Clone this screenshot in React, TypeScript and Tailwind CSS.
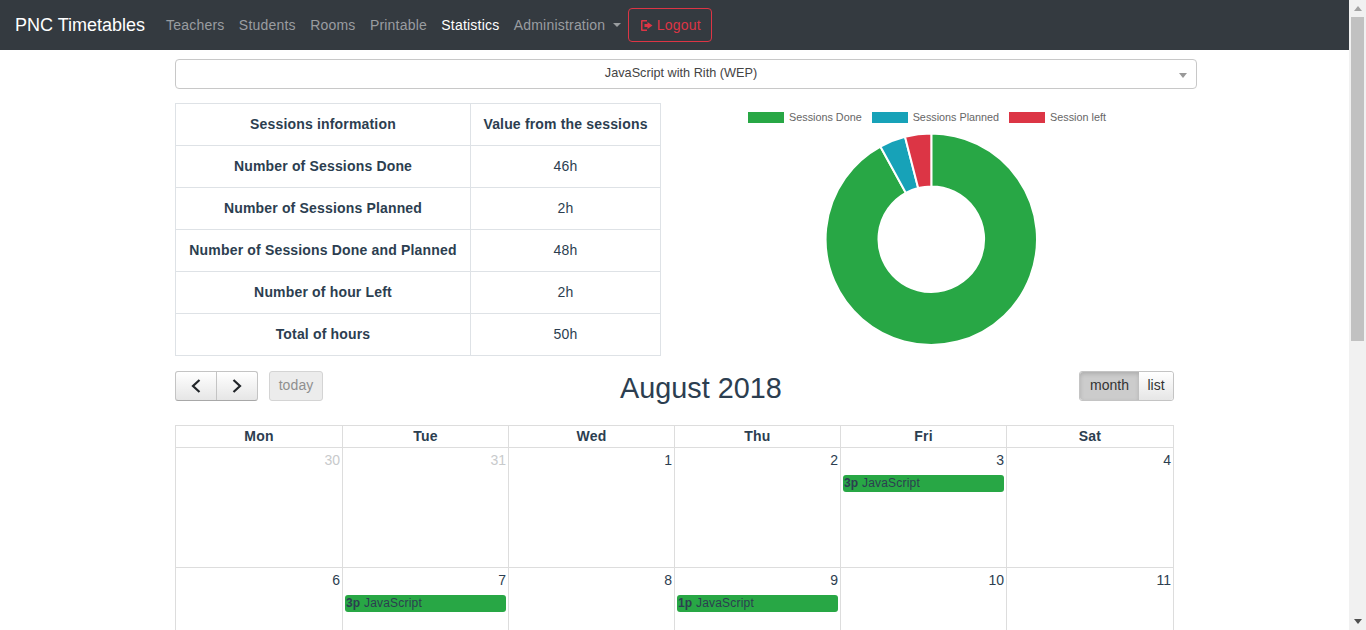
const NAV_LINKS = ['Teachers', 'Students', 'Rooms', 'Printable', 'Statistics', 'Administration']

const STATS = [
  ['Number of Sessions Done', '46h'],
  ['Number of Sessions Planned', '2h'],
  ['Number of Sessions Done and Planned', '48h'],
  ['Number of hour Left', '2h'],
  ['Total of hours', '50h'],
]

const LEGEND = [
  { label: 'Sessions Done', color: 'bg-[#28a745]' },
  { label: 'Sessions Planned', color: 'bg-[#17a2b8]' },
  { label: 'Session left', color: 'bg-[#dc3545]' },
]

const DAYS = ['Mon', 'Tue', 'Wed', 'Thu', 'Fri', 'Sat']

const WEEKS = [
  [
    { n: 30, muted: true },
    { n: 31, muted: true },
    { n: 1 },
    { n: 2 },
    { n: 3, event: '3p' },
    { n: 4 },
  ],
  [
    { n: 6 },
    { n: 7, event: '3p' },
    { n: 8 },
    { n: 9, event: '1p' },
    { n: 10 },
    { n: 11 },
  ],
]

// donut slice between two angles (degrees, clockwise from 12 o'clock)
function slice(from: number, to: number, R = 105.7, r = 52.8, cx = 107.3, cy = 107.2) {
  const pt = (rad: number, a: number) => {
    const t = ((a - 90) * Math.PI) / 180
    return `${(cx + rad * Math.cos(t)).toFixed(2)} ${(cy + rad * Math.sin(t)).toFixed(2)}`
  }
  const large = to - from > 180 ? 1 : 0
  return `M${pt(R, from)} A${R} ${R} 0 ${large} 1 ${pt(R, to)} L${pt(r, to)} A${r} ${r} 0 ${large} 0 ${pt(r, from)} Z`
}

function Donut() {
  return (
    <svg width="214" height="214" viewBox="0 0 214 214" className="block">
      <path d={slice(0, 331.2)} fill="#28a745" stroke="#fff" strokeWidth="2" />
      <path d={slice(331.2, 345.6)} fill="#17a2b8" stroke="#fff" strokeWidth="2" />
      <path d={slice(345.6, 360)} fill="#dc3545" stroke="#fff" strokeWidth="2" />
    </svg>
  )
}

function Scrollbar() {
  return (
    <div className="w-[17px] h-full shrink-0 bg-[#f1f1f1] flex flex-col">
      <div className="h-[17px] flex items-center justify-center">
        <span className="w-0 h-0 border-x-[4px] border-x-transparent border-b-[5px] border-b-[#a3a3a3]" />
      </div>
      <div className="h-[324px] mx-[2px] bg-[#c1c1c1]" />
      <div className="flex-1" />
      <div className="h-[17px] flex items-center justify-center">
        <span className="w-0 h-0 border-x-[4px] border-x-transparent border-t-[5px] border-t-[#505050]" />
      </div>
    </div>
  )
}

function Chevron({ flip }: { flip?: boolean }) {
  return (
    <svg width="10" height="14" viewBox="0 0 10 14" fill="none" stroke="#212529" strokeWidth="2.2" className={flip ? 'rotate-180' : ''}>
      <path d="M8.5 1L2 7l6.5 6" />
    </svg>
  )
}

export default function App() {
  return (
    <div className="flex h-[630px] overflow-hidden bg-white text-[#2c3e50] font-['Liberation_Sans',Arial,sans-serif]">
      <div className="flex-1 min-w-0">
        {/* navbar */}
        <nav className="h-[50px] bg-[#343a40] flex items-center pl-[15px]">
          <span className="text-[18px] text-white mr-[21px]">PNC Timetables</span>
          <div className="flex items-center gap-[14.4px] text-[14px] tracking-[0.2px] text-[#9a9da0]">
            {NAV_LINKS.map(link => (
              <span key={link} className={link === 'Statistics' ? 'text-white' : ''}>
                {link}
              </span>
            ))}
          </div>
          <span className="ml-[8px] w-0 h-0 border-x-[4px] border-x-transparent border-t-[4px] border-t-[#9a9da0]" />
          <button className="ml-[7px] h-[34px] w-[84px] border border-[#dc3545] rounded-[4px] text-[14px] tracking-[0.2px] text-[#dc3545] flex items-center justify-center gap-[4px]">
            <svg width="13" height="13" viewBox="0 0 13 13" fill="#dc3545">
              <path d="M2 1h5v1.5H2.5v8H7V12H2a1 1 0 0 1-1-1V2a1 1 0 0 1 1-1z" />
              <path d="M7.5 3l5 3.5-5 3.5V8H4.5V5h3z" />
            </svg>
            Logout
          </button>
        </nav>

        <div className="pl-[175px] pt-[9px]">
          {/* select */}
          <div className="relative w-[1022px] h-[30px] border border-[#c8c8c8] rounded-[4px] flex items-center justify-center pr-[10px] pb-[1px] text-[12.7px] text-[#444]">
            JavaScript with Rith (WEP)
            <span className="absolute right-[9px] top-[13px] w-0 h-0 border-x-[4px] border-x-transparent border-t-[5px] border-t-[#999]" />
          </div>

          {/* stats + chart */}
          <div className="flex mt-[14px]">
            <div className="w-[486px] border-t border-l border-[#dee2e6] text-[14px] tracking-[0.17px] shrink-0">
              <div className="grid grid-cols-[295px_190px] h-[42px]">
                <div className="border-r border-b border-[#dee2e6] flex items-center justify-center font-bold">Sessions information</div>
                <div className="border-r border-b border-[#dee2e6] flex items-center justify-center font-bold">Value from the sessions</div>
              </div>
              {STATS.map(([label, value]) => (
                <div key={label} className="grid grid-cols-[295px_190px] h-[42px]">
                  <div className="border-r border-b border-[#dee2e6] flex items-center justify-center font-bold">{label}</div>
                  <div className="border-r border-b border-[#dee2e6] flex items-center justify-center">{value}</div>
                </div>
              ))}
            </div>
            <div className="w-[536px] flex flex-col items-center">
              <div className="flex items-center gap-[10px] text-[10.8px] text-[#666] h-[28px] mr-[4px]">
                {LEGEND.map(item => (
                  <span key={item.label} className="flex items-center gap-[5px]">
                    <span className={`w-[36px] h-[11px] ${item.color}`} />
                    {item.label}
                  </span>
                ))}
              </div>
              <div className="mt-[1px] ml-[4px]">
                <Donut />
              </div>
            </div>
          </div>

          {/* calendar toolbar */}
          <div className="w-[999px] mt-[15px] relative flex items-center justify-between h-[30px]">
            <div className="flex items-center">
              <div className="flex w-[83px] h-[30px] rounded-[3px] border border-[#c4c4c4] border-b-[#a8a8a8] bg-gradient-to-b from-white to-[#e6e6e6]">
                <span className="flex-1 flex items-center justify-center border-r border-[#c4c4c4]">
                  <Chevron />
                </span>
                <span className="flex-1 flex items-center justify-center">
                  <Chevron flip />
                </span>
              </div>
              <div className="ml-[11px] w-[54px] h-[30px] pb-[2px] rounded-[3px] border border-[#d4d4d4] bg-[#ececec] flex items-center justify-center text-[14px] tracking-[0.1px] text-[#8f8f8f]">
                today
              </div>
            </div>
            <div className="flex w-[95px] h-[30px] rounded-[3px] border border-[#c4c4c4] text-[14px] text-[#333]">
              <span className="w-[59px] pb-[2px] flex items-center justify-center bg-[#cccccc] shadow-[inset_0_2px_4px_rgba(0,0,0,0.15)] rounded-l-[3px]">month</span>
              <span className="flex-1 pb-[2px] flex items-center justify-center bg-gradient-to-b from-white to-[#e6e6e6] rounded-r-[3px]">list</span>
            </div>
            <div className="absolute left-[445px] top-0 text-[28.8px] leading-[34px] whitespace-nowrap">
              August 2018
            </div>
          </div>

          {/* calendar grid */}
          <div className="w-[999px] mt-[24px] border-t border-l border-[#ddd] grid grid-cols-[167px_166px_166px_166px_166px_167px]">
            {DAYS.map(day => (
              <div key={day} className="h-[22px] border-r border-b border-[#ddd] flex items-center justify-center text-[14px] tracking-[0.2px] font-bold">
                {day}
              </div>
            ))}
            {WEEKS.flat().map(cell => (
              <div key={cell.n} className="h-[120px] border-r border-b border-[#ddd] px-[2px] pt-[2px]">
                <div className={`text-right text-[14px] leading-[20px] ${cell.muted ? 'text-[#c8cacc]' : ''}`}>
                  {cell.n}
                </div>
                {cell.event && (
                  <div className="mt-[5px] h-[17px] bg-[#28a745] rounded-[3px] text-[12px] tracking-[0.2px] leading-[16px] pl-[1px] whitespace-nowrap">
                    <span className="font-bold">{cell.event}</span> JavaScript
                  </div>
                )}
              </div>
            ))}
          </div>
        </div>
      </div>
      <Scrollbar />
    </div>
  )
}
